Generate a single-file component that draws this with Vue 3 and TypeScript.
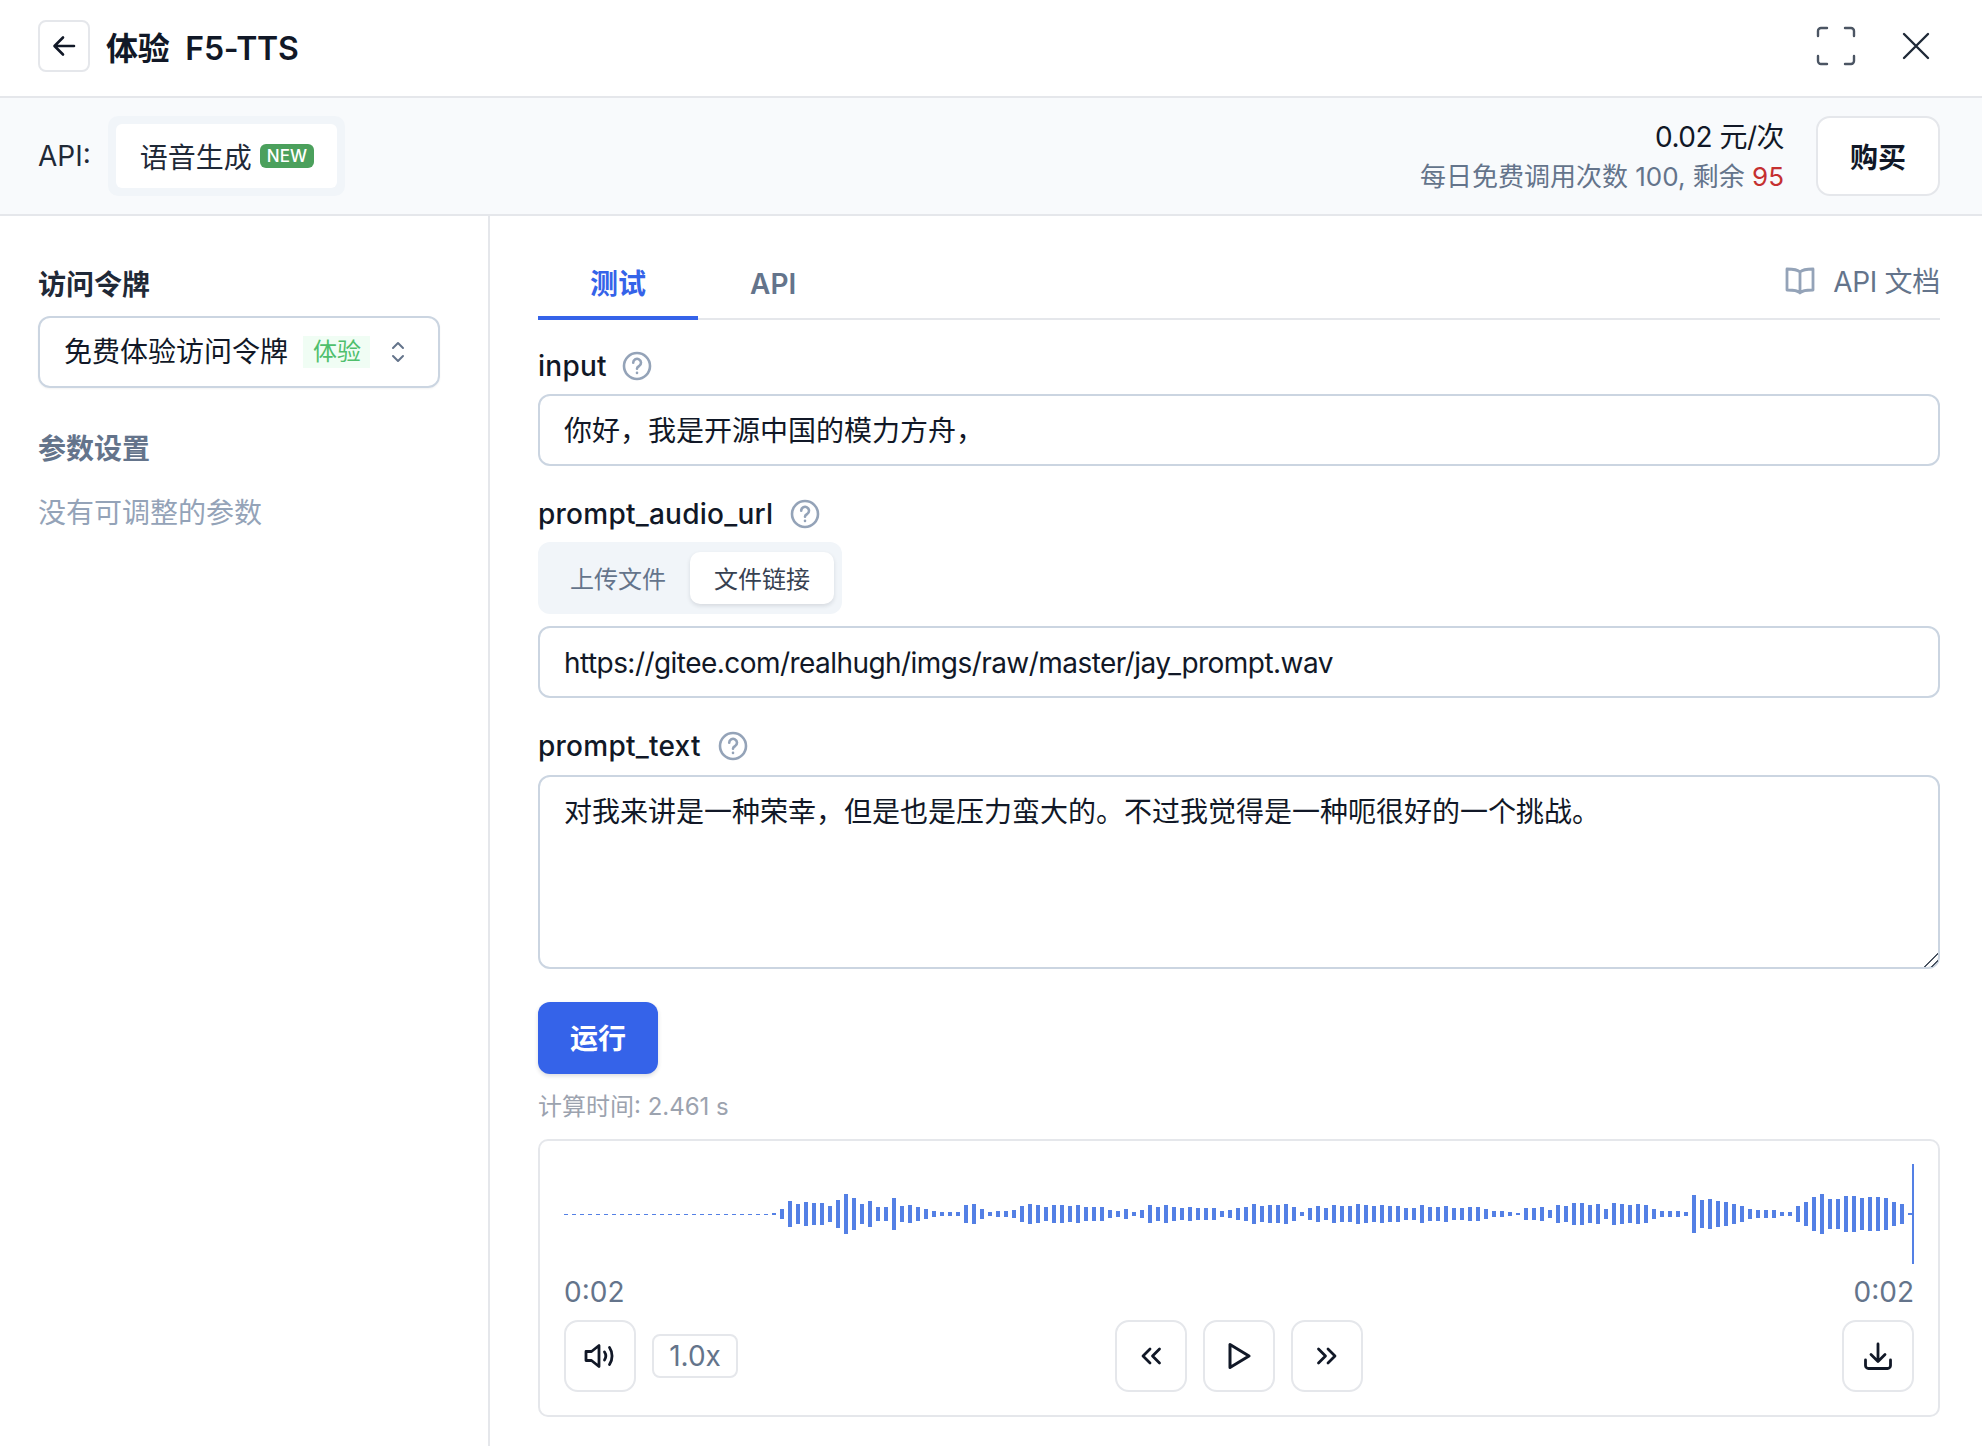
<script setup lang="ts">
import { ref } from "vue";

const inputText = ref<string>("你好，我是开源中国的模力方舟，");
const audioUrl = ref<string>("https://gitee.com/realhugh/imgs/raw/master/jay_prompt.wav");
const promptText = ref<string>("对我来讲是一种荣幸，但是也是压力蛮大的。不过我觉得是一种呃很好的一个挑战。");

const quiet: number[] = new Array(26).fill(1);

// bar heights read off the waveform, left to right
const peaks: number[] = [
  2, 10, 26, 20, 24, 22, 22, 16, 28, 40, 32, 20, 26, 14, 14, 32, 16, 18, 14, 10, 6, 4, 4, 4, 18, 20, 10, 4, 6, 6, 8, 16,
  20, 18, 14, 18, 18, 16, 18, 14, 14, 14, 8, 6, 10, 4, 8, 18, 14, 18, 14, 12, 14, 12, 12, 12, 6, 8, 12, 14, 20, 16, 18,
  18, 20, 14, 4, 12, 16, 12, 18, 16, 16, 20, 18, 16, 18, 16, 16, 12, 12, 18, 14, 14, 16, 12, 12, 14, 14, 10, 6, 6, 4, 2,
  12, 12, 14, 8, 18, 16, 22, 22, 18, 20, 10, 22, 20, 18, 20, 18, 10, 6, 6, 6, 4, 38, 28, 30, 26, 24, 20, 16, 10, 8, 8, 8,
  4, 4, 16, 24, 34, 40, 30, 30, 36, 36, 32, 34, 34, 32, 24, 20, 2,
];

const bars: number[] = [...quiet, ...peaks];
</script>

<template>
  <div class="page">
    <header class="top">
      <button class="back">
        <svg width="28" height="28" viewBox="0 0 28 28" fill="none" stroke="#111827" stroke-width="2.6" stroke-linecap="round" stroke-linejoin="round">
          <path d="M24 14H5M13 5.5 4.5 14l8.5 8.5" />
        </svg>
      </button>
      <h1 class="title">{{ "体验  F5-TTS" }}</h1>
      <div class="top-icons">
        <svg width="40" height="40" viewBox="0 0 40 40" fill="none" stroke="#4b5563" stroke-width="2.4" stroke-linecap="round">
          <path d="M2 10V5a3 3 0 0 1 3-3h6M29 2h6a3 3 0 0 1 3 3v5M38 30v5a3 3 0 0 1-3 3h-6M11 38H5a3 3 0 0 1-3-3v-5" />
        </svg>
        <svg width="28" height="28" viewBox="0 0 28 28" fill="none" stroke="#1f2937" stroke-width="2.4" stroke-linecap="round">
          <path d="M2 2l24 24M26 2 2 26" />
        </svg>
      </div>
    </header>

    <section class="api-bar">
      <span class="api-label">API:</span>
      <div class="api-tabs">
        <div class="api-tab">
          <span>语音生成</span>
          <span class="badge">NEW</span>
        </div>
      </div>
      <div class="price">
        <div class="price-main">0.02 元/次</div>
        <div class="price-sub">每日免费调用次数 100, 剩余 <span class="left">95</span></div>
      </div>
      <button class="buy">购买</button>
    </section>

    <div class="body">
      <aside class="side">
        <div class="side-title">访问令牌</div>
        <div class="select">
          <span>免费体验访问令牌</span>
          <span class="tag">体验</span>
          <svg class="updown" width="16" height="24" viewBox="0 0 16 24" fill="none" stroke="#64748b" stroke-width="2" stroke-linecap="round" stroke-linejoin="round">
            <path d="M3 8l5-5 5 5M3 16l5 5 5-5" />
          </svg>
        </div>
        <div class="side-sub">参数设置</div>
        <div class="side-empty">没有可调整的参数</div>
      </aside>

      <main class="main">
        <div class="tabs">
          <div class="tab active">测试</div>
          <div class="tab">API</div>
          <div class="docs">
            <svg width="30" height="28" viewBox="0 0 30 28" fill="none" stroke="#94a3b8" stroke-width="2.8" stroke-linejoin="round">
              <path d="M15 5C13 3 10 2 2 2v21c8 0 11 .5 13 3 2-2.500 5-3 13-3V2c-8 0-11 1-13 3zM15 5v21" />
            </svg>
            <span>API 文档</span>
          </div>
        </div>

        <label class="field-label first">
          input
          <svg class="help" width="30" height="30" viewBox="0 0 30 30" fill="none" stroke="#94a3b8" stroke-width="2.6" stroke-linecap="round">
            <circle cx="15" cy="15" r="13" />
            <path d="M11.200 11.800a3.900 3.900 0 1 1 6 3.200c-1.400.8-2.200 1.500-2.200 2.800M15 21.800v.1" />
          </svg>
        </label>
        <input v-model="inputText" class="text-input cjk" type="text" />

        <label class="field-label second">
          prompt_audio_url
          <svg class="help" width="30" height="30" viewBox="0 0 30 30" fill="none" stroke="#94a3b8" stroke-width="2.6" stroke-linecap="round">
            <circle cx="15" cy="15" r="13" />
            <path d="M11.200 11.800a3.900 3.900 0 1 1 6 3.200c-1.400.8-2.200 1.500-2.200 2.800M15 21.800v.1" />
          </svg>
        </label>
        <div class="segment">
          <div class="seg-item">上传文件</div>
          <div class="seg-item on">文件链接</div>
        </div>
        <input v-model="audioUrl" class="text-input url" type="text" />

        <label class="field-label third">
          prompt_text
          <svg class="help" width="30" height="30" viewBox="0 0 30 30" fill="none" stroke="#94a3b8" stroke-width="2.6" stroke-linecap="round">
            <circle cx="15" cy="15" r="13" />
            <path d="M11.200 11.800a3.900 3.900 0 1 1 6 3.200c-1.400.8-2.200 1.500-2.200 2.800M15 21.800v.1" />
          </svg>
        </label>
        <textarea v-model="promptText" class="text-area"></textarea>

        <button class="run">运行</button>
        <div class="elapsed">计算时间: 2.461 s</div>

        <div class="player">
          <div class="wave">
            <i v-for="(h, i) in bars" :key="i" class="bar" :style="{ height: h + 'px' }"></i>
            <i class="cursor"></i>
          </div>
          <div class="times">
            <span>0:02</span>
            <span>0:02</span>
          </div>
          <div class="controls">
            <div class="ctl-left">
              <button class="ctl">
                <svg width="32" height="26" viewBox="0 0 32 26" fill="none" stroke="#111827" stroke-width="2.800" stroke-linecap="round" stroke-linejoin="round">
                  <path d="M2 8.500h5.500L15 2.500v21l-7.500-6H2zM20.500 9c1.600 2.400 1.600 5.600 0 8M25.500 4.500c3.400 5 3.400 12 0 17" />
                </svg>
              </button>
              <div class="speed">1.0x</div>
            </div>
            <div class="ctl-mid">
              <button class="ctl">
                <svg width="22" height="18" viewBox="0 0 22 18" fill="none" stroke="#111827" stroke-width="2.800" stroke-linecap="round" stroke-linejoin="round">
                  <path d="M10 2 3 9l7 7M19.500 2l-7 7 7 7" />
                </svg>
              </button>
              <button class="ctl">
                <svg width="24" height="28" viewBox="0 0 24 28" fill="none" stroke="#111827" stroke-width="3" stroke-linecap="round" stroke-linejoin="round">
                  <path d="M3 2.500v23L22 14z" />
                </svg>
              </button>
              <button class="ctl">
                <svg width="22" height="18" viewBox="0 0 22 18" fill="none" stroke="#111827" stroke-width="2.800" stroke-linecap="round" stroke-linejoin="round">
                  <path d="M2.500 2l7 7-7 7M12 2l7 7-7 7" />
                </svg>
              </button>
            </div>
            <div class="ctl-right">
              <button class="ctl">
                <svg width="30" height="28" viewBox="0 0 30 28" fill="none" stroke="#111827" stroke-width="2.800" stroke-linecap="round" stroke-linejoin="round">
                  <path d="M15 2v17M8 12.500l7 7 7-7M2.500 18v5.500a3 3 0 0 0 3 3h19a3 3 0 0 0 3-3V18" />
                </svg>
              </button>
            </div>
          </div>
        </div>
      </main>
    </div>
  </div>
</template>

<style scoped>
.page {
  width: 1982px;
  height: 1446px;
  display: flex;
  flex-direction: column;
  overflow: hidden;
  background: #fff;
  color: #111827;
  font-family: Inter, "Noto Sans CJK SC", sans-serif;
  font-size: 28px;
}

button {
  font-family: inherit;
  cursor: pointer;
}

.top {
  height: 98px;
  flex-shrink: 0;
  display: flex;
  align-items: center;
  padding: 0 52px 4px 38px;
  box-sizing: border-box;
  border-bottom: 2px solid #e5e7eb;
}

.back {
  width: 52px;
  height: 52px;
  padding: 0;
  display: flex;
  align-items: center;
  justify-content: center;
  background: #fff;
  border: 2px solid #e5e7eb;
  border-radius: 8px;
}

.title {
  margin: 0 0 0 16px;
  font-size: 32px;
  font-weight: 600;
  letter-spacing: -0.2px;
  white-space: pre;
}

.top-icons {
  margin-left: auto;
  display: flex;
  align-items: center;
  gap: 46px;
}

.api-bar {
  height: 118px;
  flex-shrink: 0;
  display: flex;
  align-items: center;
  padding: 0 41px 0 38px;
  box-sizing: border-box;
  background: #f8fafc;
  border-bottom: 2px solid #e5e7eb;
}

.api-label {
  margin-right: 17px;
  color: #1f2937;
}

.api-tabs {
  padding: 8px;
  background: #f1f5f9;
  border-radius: 10px;
}

.api-tab {
  height: 64px;
  display: flex;
  align-items: center;
  gap: 8px;
  padding: 0 23px 0 24px;
  background: #fff;
  border-radius: 6px;
  color: #1f2937;
}

.badge {
  height: 24px;
  padding: 0 7px;
  display: flex;
  align-items: center;
  background: #4ba05c;
  border-radius: 6px;
  color: #fff;
  font-size: 17px;
  font-weight: 500;
}

.price {
  margin-left: auto;
  margin-top: 2px;
  text-align: right;
  line-height: 40px;
}

.price-main {
  letter-spacing: -0.5px;
}

.price-sub {
  font-size: 26px;
  color: #64748b;
}

.left {
  color: #c53030;
}

.buy {
  width: 124px;
  height: 80px;
  margin-left: 32px;
  margin-right: 1px;
  padding: 0;
  background: #fff;
  border: 2px solid #e5e7eb;
  border-radius: 14px;
  color: #111827;
  font-size: 28px;
  font-weight: 600;
}

.body {
  flex: 1;
  display: flex;
  min-height: 0;
}

.side {
  width: 490px;
  flex-shrink: 0;
  box-sizing: border-box;
  padding: 49px 48px 0 38px;
  border-right: 2px solid #e5e7eb;
  line-height: 40px;
}

.side-title {
  font-weight: 600;
  color: #1f2937;
}

.select {
  height: 72px;
  margin-top: 11px;
  display: flex;
  align-items: center;
  padding: 0 24px;
  box-sizing: border-box;
  border: 2px solid #cbd5e1;
  border-radius: 12px;
  box-shadow: 0 1px 2px rgba(0, 0, 0, 0.05);
  white-space: nowrap;
}

.tag {
  height: 32px;
  margin-left: 15px;
  padding: 0 9px 0 10px;
  display: flex;
  align-items: center;
  background: #f0fdf4;
  color: #4fbf6c;
  font-size: 24px;
}

.updown {
  margin-left: 20px;
}

.side-sub {
  margin-top: 41px;
  font-weight: 600;
  color: #64748b;
}

.side-empty {
  margin-top: 24px;
  color: #94a3b8;
}

.main {
  flex: 1;
  min-width: 0;
  display: flex;
  flex-direction: column;
  align-items: flex-start;
  padding: 0 42px 0 48px;
}

.tabs {
  width: 100%;
  height: 104px;
  flex-shrink: 0;
  display: flex;
  align-items: flex-end;
  box-sizing: border-box;
  border-bottom: 2px solid #e5e7eb;
}

.tab {
  height: 56px;
  box-sizing: border-box;
  margin-bottom: -2px;
  padding: 0 52px;
  line-height: 40px;
  font-weight: 600;
  color: #64748b;
}

.tab.active {
  color: #3563e9;
  border-bottom: 4px solid #3563e9;
}

.docs {
  margin-left: auto;
  height: 56px;
  display: flex;
  align-items: flex-start;
  gap: 18px;
  line-height: 40px;
  letter-spacing: -0.3px;
  color: #64748b;
}

.docs svg {
  margin-top: 5px;
}

.field-label {
  display: flex;
  align-items: center;
  gap: 16px;
  height: 40px;
  font-weight: 500;
  letter-spacing: 0.25px;
}

.field-label.first {
  gap: 15px;
  margin-top: 26px;
}

.field-label.second {
  gap: 17px;
  margin-top: 28px;
}

.field-label.third {
  gap: 17px;
  margin-top: 28px;
}

.text-input,
.text-area {
  width: 100%;
  box-sizing: border-box;
  margin: 8px 0 0;
  padding: 0 24px;
  border: 2px solid #cbd5e1;
  border-radius: 12px;
  outline: none;
  color: #111827;
  background: #fff;
  font-family: inherit;
  font-size: 28px;
}

.text-input {
  height: 72px;
  flex-shrink: 0;
}

.text-input.cjk {
  padding-bottom: 2px;
}

.text-input.url {
  margin-top: 12px;
  padding-top: 2px;
  letter-spacing: -0.55px;
}

.text-area {
  height: 194px;
  flex-shrink: 0;
  margin-top: 9px;
  padding: 15px 24px;
  line-height: 40px;
  display: block;
}

.text-area::-webkit-resizer {
  background: linear-gradient(135deg, transparent 0 52%, #4b5563 52% 60%, transparent 60% 74%, #4b5563 74% 82%, transparent 82%);
}

.segment {
  margin-top: 8px;
  padding: 10px 8px;
  display: flex;
  background: #f1f5f9;
  border-radius: 12px;
}

.seg-item {
  width: 144px;
  height: 52px;
  padding-bottom: 2px;
  box-sizing: border-box;
  display: flex;
  align-items: center;
  justify-content: center;
  font-size: 24px;
  color: #64748b;
  border-radius: 10px;
}

.seg-item.on {
  background: #fff;
  color: #374151;
  box-shadow: 0 2px 4px rgba(15, 23, 42, 0.12);
}

.run {
  width: 120px;
  height: 72px;
  flex-shrink: 0;
  margin-top: 33px;
  padding: 0 0 2px;
  background: #3563e9;
  border: none;
  border-radius: 12px;
  box-shadow: 0 2px 4px rgba(15, 23, 42, 0.15);
  color: #fff;
  font-size: 28px;
  font-weight: 600;
}

.elapsed {
  margin-top: 15px;
  line-height: 36px;
  font-size: 24px;
  color: #9ca3af;
}

.player {
  width: 100%;
  height: 278px;
  flex-shrink: 0;
  margin-top: 14px;
  padding: 23px 24px 0;
  box-sizing: border-box;
  border: 2px solid #e5e7eb;
  border-radius: 10px;
}

.wave {
  position: relative;
  height: 100px;
  display: flex;
  align-items: center;
  gap: 4px;
}

.bar {
  width: 4px;
  flex-shrink: 0;
  background: #5480e5;
}

.cursor {
  position: absolute;
  right: 0;
  top: 0;
  width: 2px;
  height: 100px;
  background: #5480e5;
}

.times {
  margin-top: 8px;
  display: flex;
  justify-content: space-between;
  line-height: 40px;
  color: #64748b;
}

.controls {
  margin-top: 8px;
  display: grid;
  grid-template-columns: 1fr auto 1fr;
  align-items: center;
}

.ctl-left {
  display: flex;
  align-items: center;
  gap: 16px;
}

.ctl-mid {
  display: flex;
  gap: 16px;
}

.ctl-right {
  display: flex;
  justify-content: flex-end;
}

.ctl {
  width: 72px;
  height: 72px;
  padding: 0;
  display: flex;
  align-items: center;
  justify-content: center;
  background: #fff;
  border: 2px solid #e5e7eb;
  border-radius: 14px;
}

.speed {
  width: 86px;
  height: 44px;
  box-sizing: border-box;
  display: flex;
  align-items: center;
  justify-content: center;
  border: 2px solid #e5e7eb;
  border-radius: 8px;
  color: #64748b;
}
</style>
